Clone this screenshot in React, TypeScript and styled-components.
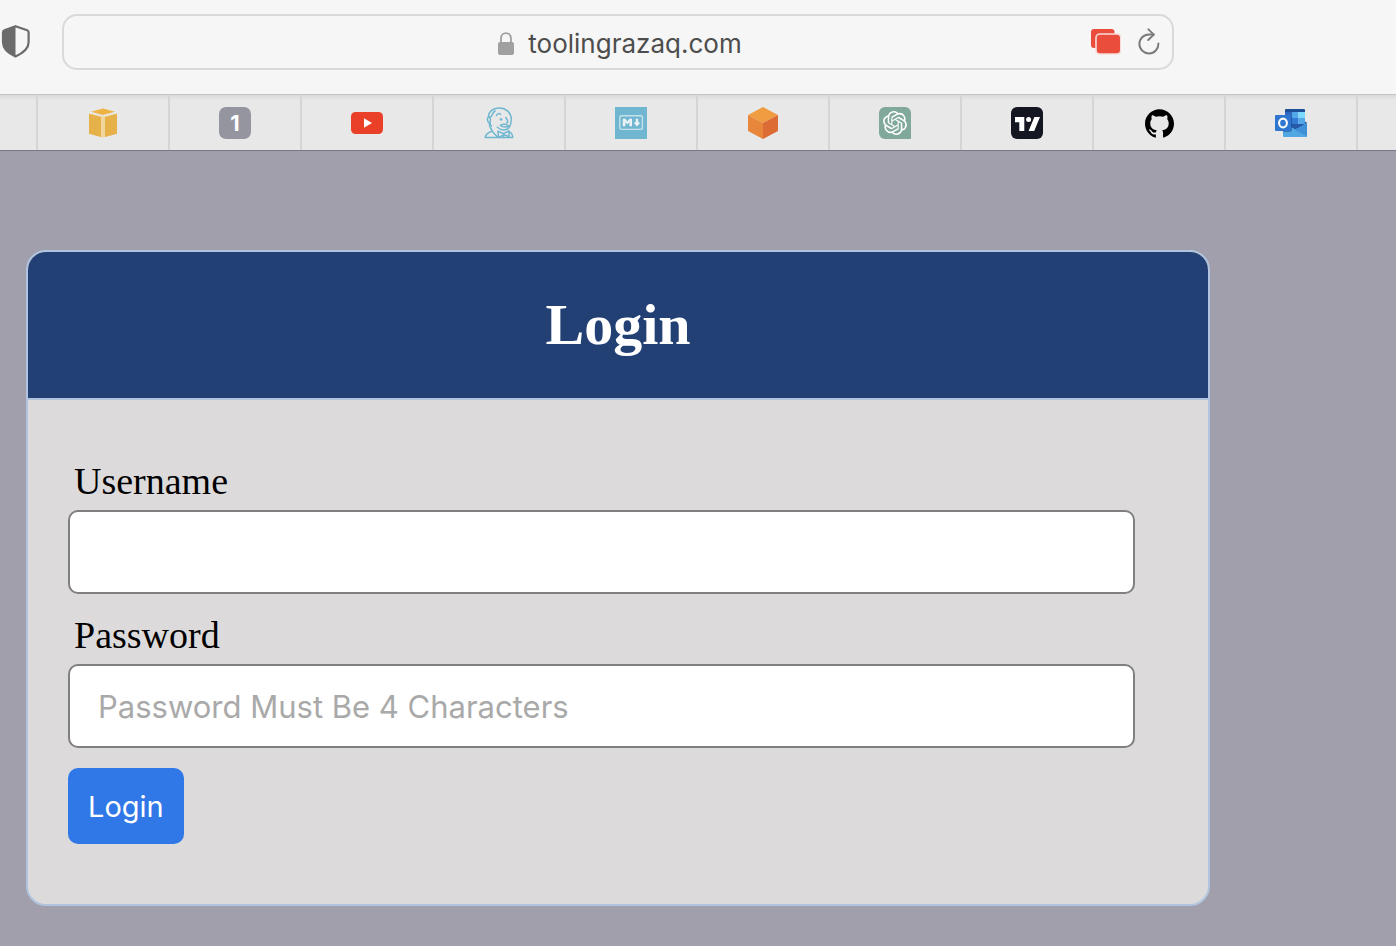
import React from "react";
import styled, { createGlobalStyle } from "styled-components";
import { SiGithub, SiOpenai } from "react-icons/si";

const sans = `Inter, "Liberation Sans", sans-serif`;
const serif = `"Liberation Serif", "Times New Roman", serif`;

const GlobalStyle = createGlobalStyle`
  *, *::before, *::after { box-sizing: border-box; }
  body { margin: 0; background: #a09fab; font-family: ${serif}; color: #000; }
`;

const Page = styled.div`
  display: flex;
  flex-direction: column;
  min-height: 100vh;
`;

const Toolbar = styled.header`
  display: flex;
  align-items: center;
  gap: 32px;
  padding: 14px 222px 24px 0;
  background: #f6f6f6;
`;

const IconButton = styled.button`
  display: flex;
  padding: 0;
  border: 0;
  background: none;
`;

const AddressBar = styled.div`
  display: grid;
  grid-template-columns: 1fr auto 1fr;
  align-items: center;
  flex: 1;
  height: 56px;
  padding: 0 12px 0 16px;
  border: 2px solid #d9d9d9;
  border-radius: 15px;
`;

const Address = styled.div`
  grid-column: 2;
  display: flex;
  align-items: center;
  gap: 14px;
  padding-top: 4px;
  font: 400 26px/32px ${sans};
  color: #4d4d4d;
`;

const AddressActions = styled.div`
  display: flex;
  align-items: center;
  justify-content: flex-end;
  gap: 17px;
`;

const TabStrip = styled.nav`
  display: flex;
  height: 57px;
  overflow: hidden;
  background: linear-gradient(#d9d9d9, #e8e8e8 5px);
  border-top: 1px solid #c4c4c4;
  border-bottom: 1px solid #797986;
`;

const TabStub = styled.div`
  flex: 0 0 36px;
`;

const Tab = styled.a`
  display: flex;
  flex: 0 0 132px;
  align-items: center;
  justify-content: center;
  padding-top: 1px;
  border-left: 2px solid #d5d5d5;
  text-decoration: none;
`;

const Tile = styled.span<{ $bg: string; $radius?: string }>`
  display: flex;
  align-items: center;
  justify-content: center;
  width: 32px;
  height: 32px;
  border-radius: ${(p) => p.$radius ?? "0"};
  background: ${(p) => p.$bg};
  color: #fff;
  font: 700 22px/32px ${sans};
`;

const Content = styled.main`
  padding: 99px 186px 40px 26px;
`;

const Card = styled.section`
  overflow: hidden;
  border: 2px solid #b0c4de;
  border-radius: 20px;
  background: #dcdadb;
`;

const CardHeader = styled.div`
  padding: 40px;
  border-bottom: 2px solid #b0c4de;
  background: #234075;
  text-align: center;
`;

const Title = styled.h1`
  margin: 0;
  font: 700 58px/66px ${serif};
  color: #fff;
`;

const Form = styled.form`
  display: flex;
  flex-direction: column;
  align-items: flex-start;
  gap: 20px;
  padding: 60px 40px;
`;

const Field = styled.div`
  display: flex;
  flex-direction: column;
  gap: 8px;
  width: 97%;
`;

const Label = styled.label`
  padding-left: 6px;
  font-size: 38px;
  line-height: 42px;
`;

const Input = styled.input`
  width: 100%;
  height: 84px;
  padding: 0 28px;
  border: 2px solid #808080;
  border-radius: 10px;
  background: #fff;
  font: 400 31px/40px ${sans};
  &::placeholder { color: #a9a9a9; opacity: 1; }
`;

const SubmitButton = styled.button`
  padding: 19px 20px 17px;
  border: 0;
  border-radius: 10px;
  background: #3077e8;
  color: #fff;
  font: 400 29px/40px ${sans};
`;

const ShieldIcon = () => (
  <svg width="30" height="34" viewBox="0 0 30 34" aria-hidden="true">
    <path d="M15.5 1.2 L27.2 5.2 Q28.6 5.7 28.6 7.2 V17.2 C28.6 24.2 21.5 28.7 15.5 31.5 C9.5 28.7 3 24.2 3 17.2 V7.2 Q3 5.7 4.4 5.2 Z" fill="none" stroke="#6b6b6b" strokeWidth="2.2" strokeLinejoin="round" />
    <path d="M15.5 1.2 V31.5 C9.5 28.7 3 24.2 3 17.2 V7.2 Q3 5.7 4.4 5.2 Z" fill="#6b6b6b" />
  </svg>
);

const LockIcon = () => (
  <svg width="16" height="24" viewBox="0 0 16 24" aria-hidden="true">
    <path d="M3 11 V6.5 C3 -0.6 13 -0.6 13 6.5 V11" fill="none" stroke="#a0a0a0" strokeWidth="1.8" />
    <rect y="10" width="16" height="13" rx="2" fill="#a0a0a0" />
  </svg>
);

const WindowsIcon = () => (
  <svg width="30" height="26" viewBox="0 0 30 26" aria-hidden="true">
    <rect width="23.5" height="19" rx="3" fill="#eb4d3d" />
    <rect x="5" y="5" width="24.8" height="20" rx="4" fill="#eb4d3d" stroke="#f7dcd8" strokeWidth="1.6" />
  </svg>
);

const ReloadIcon = () => (
  <svg width="22" height="28" viewBox="0 0 22 28" fill="none" stroke="#7b7b7b" strokeWidth="2" strokeLinecap="round" strokeLinejoin="round" aria-hidden="true">
    <path d="M20.4 15.6 A9.5 9.5 0 1 1 10.9 6.4 H15.6" />
    <path d="M10.4 1.4 L15.8 6.6 L10.2 12" />
  </svg>
);

const Glyph = ({ children }: { children: React.ReactNode }) => (
  <svg width="32" height="32" viewBox="0 0 32 32" aria-hidden="true">{children}</svg>
);

const PackageIcon = () => (
  <Glyph>
    <path d="M2 6.5 L16 9.5 L30 6.5 V26.5 L16 30.5 L2 26.5 Z" fill="#f0d59d" />
    <path d="M4 4.8 L16 1.6 L28 4.8 L16 8 Z" fill="#eeb343" />
    <path d="M2 6.8 L14 10 V30 L2 26.7 Z M30 6.8 L18 10 V30 L30 26.7 Z" fill="#e7b14a" />
  </Glyph>
);

const VideoIcon = () => (
  <Glyph>
    <rect y="5" width="32" height="22" rx="4.5" fill="#eb4028" />
    <path d="M13 11.2 L21 16 L13 20.8 Z" fill="#fff" />
  </Glyph>
);

const ButlerIcon = () => (
  <Glyph>
    <g fill="none" stroke="#6fb7d1" strokeWidth="1.5" strokeLinecap="round" strokeLinejoin="round">
      <path d="M8.2 21.8 C6 20 6.6 17.5 6.2 15.8 C3.8 14 4 11 5.6 9.8 C5 5.5 9.5 1.2 15.6 1 C23 0.5 28.4 6 28.2 12.5 C28.1 18.5 26.7 22 22 22.8 C19 23.4 16 21.6 14.4 20.2" />
      <path d="M5.6 9.8 C7.4 10.2 7.8 12 7.2 15 C6.8 16.6 7.2 18 8.4 19.2" />
      <path d="M8.2 21.8 L9.2 24.3 M7.4 10 C9.8 8.5 9.2 5.5 12.2 4" />
      <path d="M13.5 8.4 C14.5 6.4 16.2 6 17.6 7.2" />
      <path d="M22.8 10.5 C24.8 13.5 25.6 15.2 23.6 16" />
      <path d="M17.4 18.5 C18.4 16.8 20.4 17.3 21.8 17.2 C23.6 17.3 24.8 17.8 25.8 19.2 C23.2 20.2 19.8 20.2 17.4 18.5 Z" />
      <path d="M9.2 24.3 C5.5 25.5 2.4 26.8 2.2 30.6 H29.6 C29.8 27.4 28.2 25.5 25.8 24.3 M9.2 24.3 L14.6 30.2" />
      <path d="M15 24.2 L20.6 26.6 L26 24 V29.6 L21 27.8 L15.4 30.4 Z M20.6 26.2 V30.4" />
    </g>
    <circle cx="18" cy="12.4" r="1.3" fill="#6fb7d1" />
  </Glyph>
);

const MarkdownMark = () => (
  <Glyph>
    <rect x="4.8" y="8.8" width="22.6" height="13.6" rx="1.8" fill="none" stroke="#c5e1eb" strokeWidth="1.4" />
    <path d="M7.8 19.3 V11.7 H10.4 L12.4 14.4 L14.4 11.7 H17 V19.3 H14.4 V15 L12.4 17.6 L10.4 15 V19.3 Z M20.8 11.7 H23.2 V15.4 H25.4 L22 19.6 L18.6 15.4 H20.8 Z" fill="#edf3f5" />
  </Glyph>
);

const CubeIcon = () => (
  <Glyph>
    <path d="M16 0 L31 8 L16 16 L1 8 Z" fill="#f09d42" />
    <path d="M1 8 L16 16 V32 L1 24 Z" fill="#e8863b" />
    <path d="M31 8 L16 16 V32 L31 24 Z" fill="#dc6b35" />
  </Glyph>
);

const ChartMark = () => (
  <Glyph>
    <path d="M4 10 H13.3 V24 H8.3 V15.2 H4 Z M23.4 10 H29 L23.2 24 H17.6 Z" fill="#fff" />
    <circle cx="17.6" cy="12.6" r="2.5" fill="#fff" />
  </Glyph>
);

const MailIcon = () => (
  <Glyph>
    <path d="M10 3 Q10 2 11 2 H29 Q30 2 30 3 V5 H10 Z" fill="#1d5097" />
    <path d="M10 5 H17 V17 H10 Z" fill="#2c69bf" />
    <path d="M17 5 H23.5 V11 H17 Z" fill="#51a7e8" />
    <path d="M23.5 5 H30 V11 H23.5 Z" fill="#7bdafb" />
    <path d="M17 11 H23.5 V17 H17 Z" fill="#337bd2" />
    <path d="M23.5 11 H30 V17 H23.5 Z" fill="#51a7e8" />
    <path d="M10 17 H30 L20 23 Z" fill="#2659a8" />
    <path d="M30 14.5 L32 15.7 L20.5 23 L19 22 L30 16.5 Z" fill="#1d4b8f" />
    <path d="M8 17 L20 22 L32 30 H9 Q8 30 8 29 Z" fill="#51a7e2" />
    <path d="M32 15.7 V30 L19.5 22.5 Z" fill="#408fd7" />
    <path d="M8 9.5 H16.8 V23.5 L15.5 24.8 H8 Z" fill="#1d4b8f" opacity="0.7" />
    <rect y="8" width="16" height="16" rx="1" fill="#2f76d0" />
    <ellipse cx="8" cy="16" rx="3.9" ry="4.4" fill="none" stroke="#fff" strokeWidth="2.1" />
  </Glyph>
);

const tabs: { name: string; icon: React.ReactNode }[] = [
  { name: "Packages", icon: <PackageIcon /> },
  { name: "Pinned", icon: <Tile $bg="#9595a0" $radius="7px">1</Tile> },
  { name: "YouTube", icon: <VideoIcon /> },
  { name: "Jenkins", icon: <ButlerIcon /> },
  { name: "Markdown", icon: <Tile $bg="#71b6d1"><MarkdownMark /></Tile> },
  { name: "Cube", icon: <CubeIcon /> },
  { name: "OpenAI", icon: <Tile $bg="#80a89b" $radius="6px 6px 0 6px"><SiOpenai size={24} /></Tile> },
  { name: "TradingView", icon: <Tile $bg="#141722" $radius="6px"><ChartMark /></Tile> },
  { name: "GitHub", icon: <SiGithub size={29} color="#000" /> },
  { name: "Outlook", icon: <MailIcon /> },
];

export default function App() {
  return (
    <Page>
      <GlobalStyle />
      <Toolbar>
        <IconButton type="button" aria-label="Privacy report"><ShieldIcon /></IconButton>
        <AddressBar>
          <Address><LockIcon />toolingrazaq.com</Address>
          <AddressActions>
            <IconButton type="button" aria-label="Windows"><WindowsIcon /></IconButton>
            <IconButton type="button" aria-label="Reload"><ReloadIcon /></IconButton>
          </AddressActions>
        </AddressBar>
      </Toolbar>
      <TabStrip aria-label="Tabs">
        <TabStub />
        {tabs.map((tab) => (
          <Tab key={tab.name} href="#" aria-label={tab.name}>{tab.icon}</Tab>
        ))}
        <Tab href="#" aria-label="Next tab" />
      </TabStrip>
      <Content>
        <Card>
          <CardHeader><Title>Login</Title></CardHeader>
          <Form onSubmit={(e) => e.preventDefault()}>
            <Field>
              <Label htmlFor="username">Username</Label>
              <Input id="username" type="text" />
            </Field>
            <Field>
              <Label htmlFor="password">Password</Label>
              <Input id="password" type="password" placeholder="Password Must Be 4 Characters" />
            </Field>
            <SubmitButton type="submit">Login</SubmitButton>
          </Form>
        </Card>
      </Content>
    </Page>
  );
}
